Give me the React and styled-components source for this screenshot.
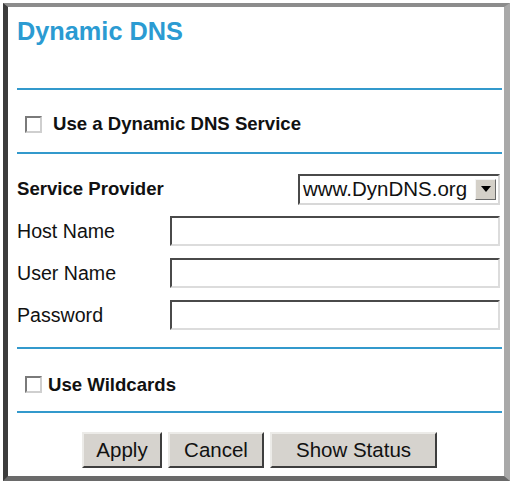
import React from "react";
import styled, { createGlobalStyle } from "styled-components";

const Global = createGlobalStyle`
  html, body { margin: 0; padding: 0; background: #ffffff; }
  body { font-family: "Liberation Sans", Arial, sans-serif; color: #111; }
  * { box-sizing: border-box; }
`;

const Frame = styled.div`
  margin: 3px 2px 0 3px;
  height: 478px;
  border-left: 5px solid #3c3c3c;
  border-top: 4px solid #8c8c8c;
  border-right: 6px solid #a9a9a9;
  border-bottom: 5px solid #6a6a6a;
  background: #ffffff;
  padding-left: 9px;
  display: flex;
  flex-direction: column;
`;

const TitleBlock = styled.div`
  height: 81px;
  padding-top: 10px;
`;

const Title = styled.h1`
  margin: 0;
  font-size: 25.3px;
  line-height: 28px;
  font-weight: bold;
  color: #2b9bd2;
`;

const Divider = styled.div`
  height: 2px;
  background: #3399cc;
  margin-right: 2px;
`;

const CheckRow = styled.label`
  height: 62px;
  padding-top: ${(p) => p.$offset}px;
  padding-left: 8px;
  display: flex;
  align-items: center;
  gap: ${(p) => p.$gap}px;
  font-size: 18.6px;
  font-weight: bold;
`;

const Box = styled.span`
  width: 17px;
  height: 17px;
  background: #fff;
  border: 2px solid;
  border-color: #7a7a7a #cfcfcf #cfcfcf #7a7a7a;
`;

const Form = styled.div`
  padding: 20px 4px 17px 0;
  display: grid;
  grid-template-columns: 153px 1fr;
  grid-auto-rows: 30px;
  row-gap: 12px;
  align-items: center;
`;

const Label = styled.div`
  font-size: ${(p) => (p.$bold ? 18.6 : 19.6)}px;
  font-weight: ${(p) => (p.$bold ? "bold" : "normal")};
  white-space: nowrap;
`;

const SelectBox = styled.div`
  justify-self: end;
  width: 202px;
  height: 31px;
  border: 2px solid;
  border-color: #4a4a4a #d8d8d8 #d8d8d8 #4a4a4a;
  background: #fff;
  display: flex;
  align-items: center;
  padding-left: 3px;
  padding-right: 2px;
  font-size: 20.5px;
  justify-content: space-between;
`;

const Arrow = styled.span`
  width: 21px;
  height: 21px;
  background: #d4d0c8;
  border: 1px solid;
  border-color: #f4f4f4 #6a6a6a #6a6a6a #f4f4f4;
  display: flex;
  align-items: center;
  justify-content: center;
`;

const TextInput = styled.input`
  width: 100%;
  height: 30px;
  border: 2px solid;
  border-color: #4a4a4a #dcdcdc #dcdcdc #4a4a4a;
  background: #fff;
  outline: none;
  padding: 0 4px;
  font-family: inherit;
  font-size: 16px;
`;

const Buttons = styled.div`
  padding-top: 19px;
  display: flex;
  justify-content: center;
  gap: 6px;
  padding-right: 2px;
`;

const Button = styled.button`
  width: ${(p) => p.$w}px;
  height: 36px;
  background: #d6d3ce;
  border: 2px solid;
  border-color: #ecebe8 #3e3e3e #3e3e3e #ecebe8;
  font-family: "Liberation Sans", Arial, sans-serif;
  font-size: 20.5px;
  color: #111;
  padding: 0;
`;

export default function App() {
  return (
    <>
      <Global />
      <Frame>
        <TitleBlock>
          <Title>Dynamic DNS</Title>
        </TitleBlock>
        <Divider />
        <CheckRow $offset={6} $gap={11}>
          <Box />
          Use a Dynamic DNS Service
        </CheckRow>
        <Divider />
        <Form>
          <Label $bold>Service Provider</Label>
          <SelectBox>
            <span>www.DynDNS.org</span>
            <Arrow>
              <svg width="10" height="6" viewBox="0 0 10 6">
                <path d="M0 0 H10 L5 6 Z" fill="#000" />
              </svg>
            </Arrow>
          </SelectBox>
          <Label>Host Name</Label>
          <TextInput type="text" />
          <Label>User Name</Label>
          <TextInput type="text" />
          <Label>Password</Label>
          <TextInput type="password" />
        </Form>
        <Divider />
        <CheckRow $offset={9} $gap={6}>
          <Box />
          Use Wildcards
        </CheckRow>
        <Divider />
        <Buttons>
          <Button $w={80}>Apply</Button>
          <Button $w={96}>Cancel</Button>
          <Button $w={167}>Show Status</Button>
        </Buttons>
      </Frame>
    </>
  );
}
